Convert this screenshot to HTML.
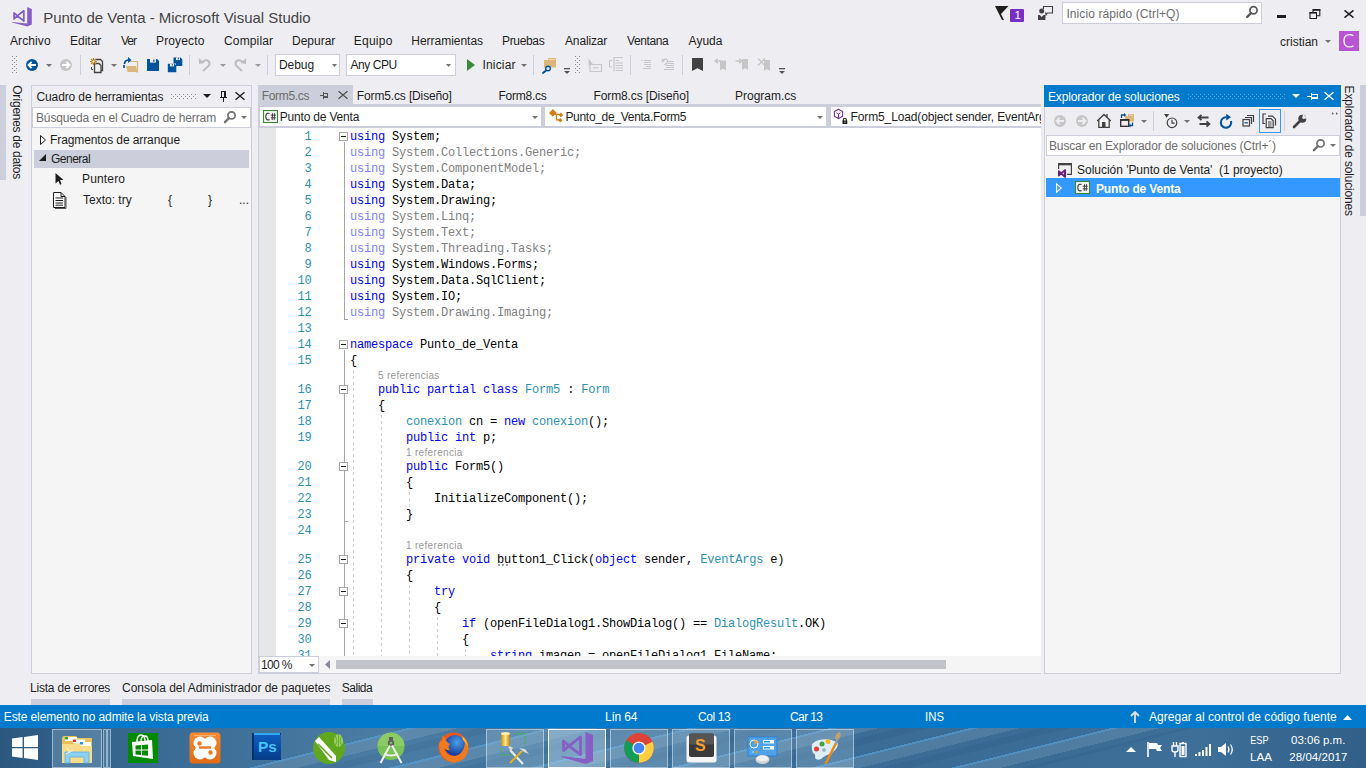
<!DOCTYPE html>
<html><head><meta charset="utf-8"><title>Punto de Venta - Microsoft Visual Studio</title>
<style>
html,body{margin:0;padding:0;}
body{width:1366px;height:768px;overflow:hidden;position:relative;background:#EEEEF2;font-family:'Liberation Sans', sans-serif;}
.t{position:absolute;white-space:pre;}
.r{position:absolute;}
svg.r{overflow:visible;}
</style></head><body>
<svg class="r" style="left:12px;top:7px;" width="20" height="20" viewBox="0 0 20 20"><path d="M15.2 0 L19.8 2 L19.8 17.6 L15.4 19.6 L0 15.6 L0 15 L15.2 16.6 Z" fill="#865FC5"/><path d="M2.1 5.9 L2.1 11.9 L5.3 8.9 Z M5.3 8.9 L11.8 3.8 L11.8 14 Z" fill="none" stroke="#865FC5" stroke-width="1.8" stroke-linejoin="round"/></svg>
<div class="t" style="left:43.20px;top:10.30px;font-size:15px;line-height:15px;color:#444444;font-weight:400;font-family:'Liberation Sans', sans-serif;letter-spacing:-0.018px;">Punto de Venta - Microsoft Visual Studio</div>
<svg class="r" style="left:995px;top:6px;" width="14" height="15" viewBox="0 0 14 15"><path d="M0 0 H13.5 L6 8 L9 14 L7 14 Z" fill="#1E1E1E"/></svg>
<div class="r" style="left:1010px;top:9px;width:14px;height:13px;background:#7A2FC4;border-radius:1px;"></div>
<div class="t" style="left:1014.5px;top:10.27px;font-size:11.5px;line-height:11.5px;color:#FFFFFF;font-weight:400;font-family:'Liberation Sans', sans-serif;letter-spacing:0px;">1</div>
<svg class="r" style="left:1038px;top:5px;" width="16" height="16" viewBox="0 0 16 16"><circle cx="3.7" cy="6" r="2.5" fill="#424242"/><path d="M0 15 V10 H1.8 L3.7 12 L5.6 10 H7.4 V15 Z" fill="#424242"/><path d="M5.5 4 V1.5 H14.5 V8 H9.5 L8 10 L7.8 8 H7" fill="none" stroke="#424242" stroke-width="1.1"/></svg>
<div class="r" style="left:1062px;top:2px;width:200px;height:22px;background:#FFFFFF;box-sizing:border-box;border:1px solid #CCCEDB;"></div>
<div class="t" style="left:1066.40px;top:7.84px;font-size:12px;line-height:12px;color:#6D6D6D;font-weight:400;font-family:'Liberation Sans', sans-serif;letter-spacing:0.095px;">Inicio rápido (Ctrl+Q)</div>
<svg class="r" style="left:1244px;top:4px;" width="14" height="15" viewBox="0 0 14 15"><circle cx="9.5" cy="6.3" r="3.6" fill="none" stroke="#555555" stroke-width="1.7"/><path d="M7 9 L3.2 13" stroke="#555555" stroke-width="2.4" stroke-linecap="round"/></svg>
<div class="r" style="left:1277px;top:15px;width:9px;height:3px;background:#1E1E1E;"></div>
<svg class="r" style="left:1309px;top:9px;" width="12" height="11" viewBox="0 0 12 11"><path d="M1 3.5 H7.5 V9.5 H1 Z" fill="none" stroke="#1E1E1E" stroke-width="1.1"/><rect x="0.5" y="3" width="7.5" height="1.6" fill="#1E1E1E"/><path d="M4 3 V0.5 H10.8 V6.8 H8" fill="none" stroke="#1E1E1E" stroke-width="1.1"/><rect x="4" y="0" width="7.3" height="1.8" fill="#1E1E1E"/></svg>
<svg class="r" style="left:1344px;top:10px;" width="10" height="8" viewBox="0 0 10 8"><path d="M0.5 0.3 L9.5 7.7 M9.5 0.3 L0.5 7.7" stroke="#1E1E1E" stroke-width="1.5"/></svg>
<div class="t" style="left:1280.00px;top:35.84px;font-size:12px;line-height:12px;color:#1E1E1E;font-weight:400;font-family:'Liberation Sans', sans-serif;letter-spacing:0.000px;">cristian</div>
<svg class="r" style="left:1325px;top:40px;" width="6" height="3" viewBox="0 0 6 3"><path d="M0 0 H6 L3 3 Z" fill="#717171"/></svg>
<div class="r" style="left:1339px;top:31px;width:20px;height:20px;background:#B955D3;"></div>
<svg class="r" style="left:1343px;top:34px;" width="12" height="14" viewBox="0 0 12 14"><path d="M10.3 1.8 Q9 0.6 6.6 0.6 Q1 0.6 1 6.8 Q1 13 6.6 13 Q9 13 10.5 11.8" fill="none" stroke="#FFFFFF" stroke-width="1.2"/></svg>
<div class="t" style="left:10.00px;top:34.84px;font-size:12px;line-height:12px;color:#1E1E1E;font-weight:400;font-family:'Liberation Sans', sans-serif;letter-spacing:0.100px;">Archivo</div>
<div class="t" style="left:70.00px;top:34.84px;font-size:12px;line-height:12px;color:#1E1E1E;font-weight:400;font-family:'Liberation Sans', sans-serif;letter-spacing:0.000px;">Editar</div>
<div class="t" style="left:121.00px;top:34.84px;font-size:12px;line-height:12px;color:#1E1E1E;font-weight:400;font-family:'Liberation Sans', sans-serif;letter-spacing:-1.000px;">Ver</div>
<div class="t" style="left:156.00px;top:34.84px;font-size:12px;line-height:12px;color:#1E1E1E;font-weight:400;font-family:'Liberation Sans', sans-serif;letter-spacing:0.143px;">Proyecto</div>
<div class="t" style="left:224.00px;top:34.84px;font-size:12px;line-height:12px;color:#1E1E1E;font-weight:400;font-family:'Liberation Sans', sans-serif;letter-spacing:0.143px;">Compilar</div>
<div class="t" style="left:292.00px;top:34.84px;font-size:12px;line-height:12px;color:#1E1E1E;font-weight:400;font-family:'Liberation Sans', sans-serif;letter-spacing:0.000px;">Depurar</div>
<div class="t" style="left:353.80px;top:34.84px;font-size:12px;line-height:12px;color:#1E1E1E;font-weight:400;font-family:'Liberation Sans', sans-serif;letter-spacing:0.240px;">Equipo</div>
<div class="t" style="left:411.30px;top:34.84px;font-size:12px;line-height:12px;color:#1E1E1E;font-weight:400;font-family:'Liberation Sans', sans-serif;letter-spacing:-0.027px;">Herramientas</div>
<div class="t" style="left:502.00px;top:34.84px;font-size:12px;line-height:12px;color:#1E1E1E;font-weight:400;font-family:'Liberation Sans', sans-serif;letter-spacing:-0.333px;">Pruebas</div>
<div class="t" style="left:565.00px;top:34.84px;font-size:12px;line-height:12px;color:#1E1E1E;font-weight:400;font-family:'Liberation Sans', sans-serif;letter-spacing:-0.143px;">Analizar</div>
<div class="t" style="left:627.00px;top:34.84px;font-size:12px;line-height:12px;color:#1E1E1E;font-weight:400;font-family:'Liberation Sans', sans-serif;letter-spacing:-0.400px;">Ventana</div>
<div class="t" style="left:688.60px;top:34.84px;font-size:12px;line-height:12px;color:#1E1E1E;font-weight:400;font-family:'Liberation Sans', sans-serif;letter-spacing:0.000px;">Ayuda</div>
<div id="toolbar">
<svg class="r" style="left:12px;top:56px" width="5" height="17"><rect x="0" y="0" width="1" height="1" fill="#8A8A8A"/><rect x="4" y="0" width="1" height="1" fill="#8A8A8A"/><rect x="0" y="4" width="1" height="1" fill="#8A8A8A"/><rect x="4" y="4" width="1" height="1" fill="#8A8A8A"/><rect x="0" y="8" width="1" height="1" fill="#8A8A8A"/><rect x="4" y="8" width="1" height="1" fill="#8A8A8A"/><rect x="0" y="12" width="1" height="1" fill="#8A8A8A"/><rect x="4" y="12" width="1" height="1" fill="#8A8A8A"/><rect x="0" y="16" width="1" height="1" fill="#8A8A8A"/><rect x="4" y="16" width="1" height="1" fill="#8A8A8A"/><rect x="2" y="2" width="1" height="1" fill="#8A8A8A"/><rect x="2" y="6" width="1" height="1" fill="#8A8A8A"/><rect x="2" y="10" width="1" height="1" fill="#8A8A8A"/><rect x="2" y="14" width="1" height="1" fill="#8A8A8A"/></svg>
<svg class="r" style="left:26px;top:59px;" width="12" height="12" viewBox="0 0 12 12"><circle cx="6" cy="6" r="6" fill="#00539C"/><path d="M2.5 6 H10 M5.6 2.8 L2.5 6 L5.6 9.2" fill="none" stroke="#fff" stroke-width="1.9"/></svg>
<svg class="r" style="left:46px;top:64px;" width="6" height="3" viewBox="0 0 6 3"><path d="M0 0 H6 L3.0 3 Z" fill="#717171"/></svg>
<svg class="r" style="left:60px;top:59px;" width="12" height="12" viewBox="0 0 12 12"><circle cx="6" cy="6" r="6" fill="#C6C6C6"/><path d="M2 6 H9.5 M6.4 2.8 L9.5 6 L6.4 9.2" fill="none" stroke="#fff" stroke-width="1.9"/></svg>
<div class="r" style="left:80px;top:55px;width:1px;height:20px;background:#CCCEDB;"></div>
<svg class="r" style="left:88px;top:57px;" width="17" height="17" viewBox="0 0 17 17"><path d="M7.5 2.5 H12.5 L14.5 4.5 V13.5 H13" fill="none" stroke="#424242" stroke-width="1.3"/><path d="M6.5 6.5 H11 L13 8.5 V15.5 H6.5 Z" fill="#F0F0F0" stroke="#424242" stroke-width="1.3"/><path d="M3.5 10 V12.5 H5" fill="none" stroke="#424242" stroke-width="1"/><path d="M5.5 1 V8 M2 4.5 H9 M3 2 L8 7 M8 2 L3 7" stroke="#C27D1A" stroke-width="1.1"/><circle cx="5.5" cy="4.5" r="1.6" fill="#EEEEF2" stroke="#C27D1A" stroke-width="1"/></svg>
<svg class="r" style="left:111px;top:64px;" width="6" height="3" viewBox="0 0 6 3"><path d="M0 0 H6 L3.0 3 Z" fill="#717171"/></svg>
<svg class="r" style="left:123px;top:57px;" width="16" height="16" viewBox="0 0 16 16"><path d="M7 4.5 H14.5 V15 H13" fill="none" stroke="#DCB67A" stroke-width="1.2"/><path d="M3 9 H13 L14.5 15 H4.5 Z" fill="#DCB67A"/><path d="M1 8 V11 M1.5 7 Q1.5 3 6 3" fill="none" stroke="#00539C" stroke-width="1.7"/><path d="M5 0 L8.5 3 L5 6 Z" fill="#00539C"/></svg>
<svg class="r" style="left:147px;top:59px;" width="12" height="12" viewBox="0 0 12 12"><path d="M0 0 H10 L12 2 V12 H0 Z" fill="#00539C"/><rect x="3" y="0" width="6" height="3.6" fill="#EEEEF2"/><rect x="6.2" y="0.6" width="1.3" height="2.2" fill="#00539C"/></svg>
<svg class="r" style="left:167px;top:57px;" width="16" height="16" viewBox="0 0 16 16"><path d="M6.5 0.5 H13.5 L15.3 2.3 V9 H9 V6.5 H6.5 Z" fill="#00539C"/><rect x="9" y="0.5" width="4" height="2.6" fill="#EEEEF2"/><rect x="10.8" y="0.8" width="1" height="1.6" fill="#00539C"/><path d="M0.8 6.8 H7.5 L9.3 8.6 V15.3 H0.8 Z" fill="#00539C"/><rect x="3" y="6.8" width="4" height="2.6" fill="#EEEEF2"/><rect x="4.8" y="7.1" width="1" height="1.6" fill="#00539C"/></svg>
<div class="r" style="left:189px;top:55px;width:1px;height:20px;background:#CCCEDB;"></div>
<svg class="r" style="left:198px;top:57px;" width="14" height="16" viewBox="0 0 14 16"><path d="M4.5 5 Q7 2.5 9.5 3.5 Q12.5 5 11 8.5 L5 14" fill="none" stroke="#BDBDBD" stroke-width="2"/><path d="M0.8 1 L1 7 L6.5 6 Z" fill="#BDBDBD"/></svg>
<svg class="r" style="left:220px;top:64px;" width="6" height="3" viewBox="0 0 6 3"><path d="M0 0 H6 L3.0 3 Z" fill="#999999"/></svg>
<svg class="r" style="left:233px;top:57px;" width="14" height="16" viewBox="0 0 14 16"><path d="M9.5 5 Q7 2.5 4.5 3.5 Q1.5 5 3 8.5 L9 14" fill="none" stroke="#BDBDBD" stroke-width="2"/><path d="M13.2 1 L13 7 L7.5 6 Z" fill="#BDBDBD"/></svg>
<svg class="r" style="left:255px;top:64px;" width="6" height="3" viewBox="0 0 6 3"><path d="M0 0 H6 L3.0 3 Z" fill="#999999"/></svg>
<div class="r" style="left:267px;top:55px;width:1px;height:20px;background:#CCCEDB;"></div>
<div class="r" style="left:275px;top:54px;width:65px;height:22px;background:#FFFFFF;box-sizing:border-box;border:1px solid #CCCEDB;"></div>
<div class="t" style="left:279.00px;top:59.14px;font-size:12px;line-height:12px;color:#1E1E1E;font-weight:400;font-family:'Liberation Sans', sans-serif;letter-spacing:-0.050px;">Debug</div>
<svg class="r" style="left:332px;top:64px;" width="5" height="3" viewBox="0 0 5 3"><path d="M0 0 H5 L2.5 3 Z" fill="#717171"/></svg>
<div class="r" style="left:346px;top:54px;width:110px;height:22px;background:#FFFFFF;box-sizing:border-box;border:1px solid #CCCEDB;"></div>
<div class="t" style="left:350.50px;top:59.14px;font-size:12px;line-height:12px;color:#1E1E1E;font-weight:400;font-family:'Liberation Sans', sans-serif;letter-spacing:-0.450px;">Any CPU</div>
<svg class="r" style="left:446px;top:64px;" width="5" height="3" viewBox="0 0 5 3"><path d="M0 0 H5 L2.5 3 Z" fill="#717171"/></svg>
<svg class="r" style="left:467px;top:59px;" width="8" height="12" viewBox="0 0 8 12"><path d="M0 0 L8 6 L0 12 Z" fill="#388A34"/></svg>
<div class="t" style="left:482.50px;top:59.14px;font-size:12px;line-height:12px;color:#1E1E1E;font-weight:400;font-family:'Liberation Sans', sans-serif;letter-spacing:0.167px;">Iniciar</div>
<svg class="r" style="left:521px;top:64px;" width="6" height="3" viewBox="0 0 6 3"><path d="M0 0 H6 L3.0 3 Z" fill="#717171"/></svg>
<div class="r" style="left:533px;top:55px;width:1px;height:20px;background:#CCCEDB;"></div>
<svg class="r" style="left:541px;top:57px;" width="16" height="16" viewBox="0 0 16 16"><path d="M3 3 H7 V1 H15 V10.5 H3 Z" fill="#DCB67A"/><path d="M8 2.5 H14" stroke="#F3E3C3" stroke-width="0.8"/><circle cx="7" cy="11.5" r="2.3" fill="#EEEEF2" stroke="#00539C" stroke-width="1.4"/><path d="M5.3 13.2 L2 16" stroke="#00539C" stroke-width="1.9" stroke-linecap="round"/></svg>
<svg class="r" style="left:564px;top:68px;" width="6" height="6" viewBox="0 0 6 6"><rect x="0" y="0" width="6" height="1.3" fill="#555555"/><path d="M0 3 H6 L3 6 Z" fill="#555555"/></svg>
<svg class="r" style="left:575px;top:56px" width="5" height="17"><rect x="0" y="0" width="1" height="1" fill="#8A8A8A"/><rect x="4" y="0" width="1" height="1" fill="#8A8A8A"/><rect x="0" y="4" width="1" height="1" fill="#8A8A8A"/><rect x="4" y="4" width="1" height="1" fill="#8A8A8A"/><rect x="0" y="8" width="1" height="1" fill="#8A8A8A"/><rect x="4" y="8" width="1" height="1" fill="#8A8A8A"/><rect x="0" y="12" width="1" height="1" fill="#8A8A8A"/><rect x="4" y="12" width="1" height="1" fill="#8A8A8A"/><rect x="0" y="16" width="1" height="1" fill="#8A8A8A"/><rect x="4" y="16" width="1" height="1" fill="#8A8A8A"/><rect x="2" y="2" width="1" height="1" fill="#8A8A8A"/><rect x="2" y="6" width="1" height="1" fill="#8A8A8A"/><rect x="2" y="10" width="1" height="1" fill="#8A8A8A"/><rect x="2" y="14" width="1" height="1" fill="#8A8A8A"/></svg>
<svg class="r" style="left:588px;top:58px;" width="14" height="14" viewBox="0 0 14 14"><path d="M0.5 0 L0.5 8.5 L2.3 6.8 L5.3 6.8 Z" fill="#C6C6C6"/><path d="M2 6.5 H13.5 V13.5 H2 Z" fill="none" stroke="#C6C6C6" stroke-width="1.1"/><path d="M5 9.8 H10.5" stroke="#C6C6C6" stroke-width="1.1"/></svg>
<svg class="r" style="left:609px;top:57px;" width="15" height="15" viewBox="0 0 15 15"><path d="M0.5 3.5 V10 H3 M0.5 3.5 H3 M5 0.5 V14.5 M5 0.5 H14 M6.5 3.5 H10 M6.5 6 H14 M6.5 8.5 H14 M6.5 11 H14 M6.5 13.5 H14" fill="none" stroke="#C6C6C6" stroke-width="1.1"/></svg>
<div class="r" style="left:630px;top:55px;width:1px;height:20px;background:#CCCEDB;"></div>
<svg class="r" style="left:640px;top:59px;" width="12" height="11" viewBox="0 0 12 11"><path d="M1 1.5 H2.5 M4 1.5 H11 M4 3.5 H11 M4 5.5 H11 M6 7.5 H11 M3 9.5 H11" stroke="#C6C6C6" stroke-width="1"/></svg>
<svg class="r" style="left:661px;top:58px;" width="14" height="13" viewBox="0 0 14 13"><path d="M2 2 Q5 0 6.5 2.5 Q7.5 4.5 3.5 7" fill="none" stroke="#C6C6C6" stroke-width="1.3"/><path d="M0.5 0.5 L1 4.5 L4 3 Z" fill="#C6C6C6"/><path d="M7 3.5 H13 M7 5.5 H13 M5 7.5 H13 M5 9.5 H13 M3 11.5 H13" stroke="#C6C6C6" stroke-width="1"/></svg>
<div class="r" style="left:682px;top:55px;width:1px;height:20px;background:#CCCEDB;"></div>
<svg class="r" style="left:692px;top:58px;" width="11" height="13" viewBox="0 0 11 13"><path d="M0 0 H11 V13 L5.5 10.2 L0 13 Z" fill="#424242"/></svg>
<svg class="r" style="left:714px;top:58px;" width="13" height="13" viewBox="0 0 13 13"><path d="M6 2.5 H12 V12.5 L9 10.5 L6 12.5 Z" fill="#C6C6C6"/><path d="M1 3 H7 M3.8 0.8 L1.2 3 L3.8 5.2" fill="none" stroke="#C6C6C6" stroke-width="1.6"/></svg>
<svg class="r" style="left:735px;top:58px;" width="14" height="13" viewBox="0 0 14 13"><path d="M7 1 H13 V12 L10 10 L7 12 Z" fill="#C6C6C6"/><path d="M0.5 3 H6.5 M4.2 0.8 L6.8 3 L4.2 5.2" fill="none" stroke="#C6C6C6" stroke-width="1.6"/></svg>
<svg class="r" style="left:757px;top:58px;" width="14" height="14" viewBox="0 0 14 14"><path d="M7 2 H13 V13 L10 11 L7 13 Z" fill="#C6C6C6"/><path d="M1 0.5 L8 7.5 M8 0.5 L1 7.5" stroke="#C6C6C6" stroke-width="1.3"/></svg>
<svg class="r" style="left:779px;top:68px;" width="6" height="6" viewBox="0 0 6 6"><rect x="0" y="0" width="6" height="1.3" fill="#555555"/><path d="M0 3 H6 L3 6 Z" fill="#555555"/></svg>
</div>
<div class="r" style="left:0px;top:85px;width:6px;height:95px;background:#CCCEDB;"></div>
<div class="t" style="left:0.00px;top:0.00px;font-size:12px;line-height:12px;color:#1E1E1E;font-weight:400;font-family:'Liberation Sans', sans-serif;letter-spacing:-0.300px;transform-origin:0 0;transform:translate(23.3px,85.3px) rotate(90deg);">Orígenes de datos</div>
<div class="r" style="left:31px;top:85px;width:221px;height:589px;background:#F5F5F5;box-sizing:border-box;border:1px solid #CCCEDB;"></div>
<div class="r" style="left:32px;top:86px;width:219px;height:21px;background:#EEEEF2;"></div>
<div class="t" style="left:36.50px;top:90.84px;font-size:12px;line-height:12px;color:#1E1E1E;font-weight:400;font-family:'Liberation Sans', sans-serif;letter-spacing:-0.119px;">Cuadro de herramientas</div>
<svg class="r" style="left:171px;top:94px" width="26" height="5"><rect x="0" y="0" width="1" height="1" fill="#8E8E8E"/><rect x="4" y="0" width="1" height="1" fill="#8E8E8E"/><rect x="8" y="0" width="1" height="1" fill="#8E8E8E"/><rect x="12" y="0" width="1" height="1" fill="#8E8E8E"/><rect x="16" y="0" width="1" height="1" fill="#8E8E8E"/><rect x="20" y="0" width="1" height="1" fill="#8E8E8E"/><rect x="24" y="0" width="1" height="1" fill="#8E8E8E"/><rect x="0" y="4" width="1" height="1" fill="#8E8E8E"/><rect x="4" y="4" width="1" height="1" fill="#8E8E8E"/><rect x="8" y="4" width="1" height="1" fill="#8E8E8E"/><rect x="12" y="4" width="1" height="1" fill="#8E8E8E"/><rect x="16" y="4" width="1" height="1" fill="#8E8E8E"/><rect x="20" y="4" width="1" height="1" fill="#8E8E8E"/><rect x="24" y="4" width="1" height="1" fill="#8E8E8E"/><rect x="2" y="2" width="1" height="1" fill="#8E8E8E"/><rect x="6" y="2" width="1" height="1" fill="#8E8E8E"/><rect x="10" y="2" width="1" height="1" fill="#8E8E8E"/><rect x="14" y="2" width="1" height="1" fill="#8E8E8E"/><rect x="18" y="2" width="1" height="1" fill="#8E8E8E"/><rect x="22" y="2" width="1" height="1" fill="#8E8E8E"/></svg>
<svg class="r" style="left:203px;top:94px;" width="8" height="4" viewBox="0 0 8 4"><path d="M0 0 H8 L4 4 Z" fill="#1E1E1E"/></svg>
<svg class="r" style="left:220px;top:91px;" width="7" height="11" viewBox="0 0 7 11"><rect x="1" y="0" width="4" height="1" fill="#1E1E1E"/><rect x="1" y="0" width="1" height="6" fill="#1E1E1E"/><rect x="4" y="0" width="2" height="6" fill="#1E1E1E"/><rect x="0" y="6" width="7" height="1" fill="#1E1E1E"/><rect x="3" y="7" width="1" height="4" fill="#1E1E1E"/></svg>
<svg class="r" style="left:235px;top:92px;" width="10" height="8" viewBox="0 0 10 8"><path d="M0.5 0.3 L9.5 7.7 M9.5 0.3 L0.5 7.7" stroke="#1E1E1E" stroke-width="1.4"/></svg>
<div class="r" style="left:32px;top:107px;width:219px;height:21px;background:#FFFFFF;box-sizing:border-box;border:1px solid #CCCEDB;"></div>
<div class="t" style="left:36.00px;top:111.84px;font-size:12px;line-height:12px;color:#6D6D6D;font-weight:400;font-family:'Liberation Sans', sans-serif;letter-spacing:-0.133px;">Búsqueda en el Cuadro de herram</div>
<svg class="r" style="left:222px;top:110px;" width="15" height="15" viewBox="0 0 15 15"><circle cx="9.5" cy="5.4" r="3.6" fill="none" stroke="#717171" stroke-width="1.7"/><path d="M7 8 L3 12.2" stroke="#717171" stroke-width="2.4" stroke-linecap="round"/></svg>
<svg class="r" style="left:241px;top:116px;" width="6" height="3" viewBox="0 0 6 3"><path d="M0 0 H6 L3.0 3 Z" fill="#717171"/></svg>
<svg class="r" style="left:40px;top:135px;" width="6" height="10" viewBox="0 0 6 10"><path d="M0.5 0.5 L5.5 5 L0.5 9.5 Z" fill="#fff" stroke="#1E1E1E" stroke-width="1"/></svg>
<div class="t" style="left:50.00px;top:133.84px;font-size:12px;line-height:12px;color:#1E1E1E;font-weight:400;font-family:'Liberation Sans', sans-serif;letter-spacing:-0.095px;">Fragmentos de arranque</div>
<div class="r" style="left:34px;top:150px;width:215px;height:18px;background:#CCCEDB;"></div>
<svg class="r" style="left:39px;top:154px;" width="7" height="7" viewBox="0 0 7 7"><path d="M7 0 V7 H0 Z" fill="#1E1E1E"/></svg>
<div class="t" style="left:51.00px;top:152.84px;font-size:12px;line-height:12px;color:#1E1E1E;font-weight:400;font-family:'Liberation Sans', sans-serif;letter-spacing:-0.500px;">General</div>
<svg class="r" style="left:55px;top:173px;" width="9" height="12" viewBox="0 0 9 12"><path d="M0.5 0 L8.5 7 L5 7 L6.5 11 L5 11.7 L3.5 8 L0.5 10.5 Z" fill="#1E1E1E"/></svg>
<div class="t" style="left:82.00px;top:172.84px;font-size:12px;line-height:12px;color:#1E1E1E;font-weight:400;font-family:'Liberation Sans', sans-serif;letter-spacing:0.167px;">Puntero</div>
<svg class="r" style="left:53px;top:192px;" width="14" height="17" viewBox="0 0 14 17"><path d="M0.5 0.5 H8 L12 4.5 V15.5 H0.5 Z" fill="#fff" stroke="#1E1E1E" stroke-width="1"/><path d="M8 0.5 V4.5 H12" fill="none" stroke="#1E1E1E"/><path d="M2.5 6 H10 M2.5 8.5 H10 M2.5 11 H10 M2.5 13.2 H10" stroke="#1E1E1E" stroke-width="1"/><path d="M13 5 V16.5 H2" fill="none" stroke="#555" stroke-width="1"/></svg>
<div class="t" style="left:83.00px;top:193.84px;font-size:12px;line-height:12px;color:#1E1E1E;font-weight:400;font-family:'Liberation Sans', sans-serif;letter-spacing:0.000px;">Texto: try</div>
<div class="t" style="left:168px;top:193.84px;font-size:12px;line-height:12px;color:#1E1E1E;font-weight:400;font-family:'Liberation Sans', sans-serif;letter-spacing:0px;">{</div>
<div class="t" style="left:208px;top:193.84px;font-size:12px;line-height:12px;color:#1E1E1E;font-weight:400;font-family:'Liberation Sans', sans-serif;letter-spacing:0px;">}</div>
<div class="t" style="left:239px;top:193.84px;font-size:12px;line-height:12px;color:#1E1E1E;font-weight:400;font-family:'Liberation Sans', sans-serif;letter-spacing:0px;">...</div>
<div class="r" style="left:258px;top:85px;width:95px;height:19px;background:#CCCEDB;"></div>
<div class="t" style="left:261.70px;top:89.84px;font-size:12px;line-height:12px;color:#6D6D6D;font-weight:400;font-family:'Liberation Sans', sans-serif;letter-spacing:-0.314px;">Form5.cs</div>
<svg class="r" style="left:320px;top:92px;" width="8" height="7" viewBox="0 0 8 7"><rect x="0" y="3" width="3" height="1" fill="#555555"/><rect x="3" y="0" width="1" height="7" fill="#555555"/><rect x="4" y="1" width="4" height="1" fill="#555555"/><rect x="7" y="1" width="1" height="5" fill="#555555"/><rect x="4" y="4" width="4" height="2" fill="#555555"/></svg>
<svg class="r" style="left:338px;top:91px;" width="10" height="8" viewBox="0 0 10 8"><path d="M0.5 0.3 L9.5 7.7 M9.5 0.3 L0.5 7.7" stroke="#555555" stroke-width="1.3"/></svg>
<div class="t" style="left:356.80px;top:89.84px;font-size:12px;line-height:12px;color:#1E1E1E;font-weight:400;font-family:'Liberation Sans', sans-serif;letter-spacing:-0.138px;">Form5.cs [Diseño]</div>
<div class="t" style="left:498.50px;top:89.84px;font-size:12px;line-height:12px;color:#1E1E1E;font-weight:400;font-family:'Liberation Sans', sans-serif;letter-spacing:-0.257px;">Form8.cs</div>
<div class="t" style="left:593.50px;top:89.84px;font-size:12px;line-height:12px;color:#1E1E1E;font-weight:400;font-family:'Liberation Sans', sans-serif;letter-spacing:-0.112px;">Form8.cs [Diseño]</div>
<div class="t" style="left:735.10px;top:89.84px;font-size:12px;line-height:12px;color:#1E1E1E;font-weight:400;font-family:'Liberation Sans', sans-serif;letter-spacing:-0.022px;">Program.cs</div>
<div class="r" style="left:258px;top:104px;width:783px;height:3px;background:#CCCEDB;"></div>
<div class="r" style="left:258px;top:107px;width:783px;height:21px;background:#CCCEDB;"></div>
<div class="r" style="left:260px;top:107px;width:281px;height:19px;background:#FFFFFF;"></div>
<div class="r" style="left:545px;top:107px;width:281px;height:19px;background:#FFFFFF;"></div>
<div class="r" style="left:831px;top:107px;width:210px;height:19px;background:#FFFFFF;"></div>
<svg class="r" style="left:263px;top:110px;" width="15" height="13" viewBox="0 0 15 13"><rect x="0" y="0" width="15" height="13" fill="#FFFFFF"/><rect x="0.5" y="0.5" width="14" height="12" fill="#F3F3F3" stroke="#388A34" stroke-width="1.1"/><path d="M6.6 3.6 Q6 3.2 5 3.2 Q2.8 3.2 2.8 6.5 Q2.8 9.8 5 9.8 Q6 9.8 6.6 9.4" fill="none" stroke="#424242" stroke-width="1.15"/><path d="M7.8 5.2 H12.8 M7.8 7.8 H12.8 M9.6 3.2 L9.2 10 M11.6 3.2 L11.2 10" stroke="#424242" stroke-width="1"/></svg>
<div class="t" style="left:279.70px;top:110.84px;font-size:12px;line-height:12px;color:#1E1E1E;font-weight:400;font-family:'Liberation Sans', sans-serif;letter-spacing:-0.185px;">Punto de Venta</div>
<svg class="r" style="left:532px;top:116px;" width="6" height="3" viewBox="0 0 6 3"><path d="M0 0 H6 L3.0 3 Z" fill="#717171"/></svg>
<svg class="r" style="left:548px;top:108px;" width="16" height="16" viewBox="0 0 16 16"><g fill="#CF7F14"><path d="M4.9 1 L8.7 4.9 L4.9 8.8 L1 4.9 Z"/><path d="M12.9 4.6 L15.2 6.9 L12.9 9.2 L10.6 6.9 Z"/><path d="M12.3 10 L14.6 12.3 L12.3 14.6 L10 12.3 Z"/></g><path d="M6 6.3 H12 M8.5 6.3 V11.8 H11.5" fill="none" stroke="#CF7F14" stroke-width="1.2"/></svg>
<div class="t" style="left:565.40px;top:110.84px;font-size:12px;line-height:12px;color:#1E1E1E;font-weight:400;font-family:'Liberation Sans', sans-serif;letter-spacing:-0.300px;">Punto_de_Venta.Form5</div>
<svg class="r" style="left:817px;top:116px;" width="6" height="3" viewBox="0 0 6 3"><path d="M0 0 H6 L3.0 3 Z" fill="#717171"/></svg>
<div class="r" style="left:831px;top:107px;width:210px;height:19px;overflow:hidden">
<svg class="r" style="left:3px;top:1px;" width="18" height="17" viewBox="0 0 18 17"><path d="M4.5 1.2 L8.6 3.5 V8.3 L4.5 10.6 L0.4 8.3 V3.5 Z" fill="none" stroke="#7030A0" stroke-width="1.1"/><path d="M2.5 4.8 L4.5 6 L6.5 4.8 M4.5 6 V10.3" fill="none" stroke="#7030A0" stroke-width="1"/><path d="M9.3 13 V11.5 Q9.3 10.3 10.8 10.3 Q12.3 10.3 12.3 11.5 V13" fill="none" stroke="#1E1E1E" stroke-width="1.1"/><rect x="8.5" y="12.5" width="4.8" height="3.5" fill="#1E1E1E"/><rect x="10.4" y="13.6" width="1" height="1" fill="#FFFFFF"/></svg>
<div class="t" style="left:19.60px;top:3.84px;font-size:12px;line-height:12px;color:#1E1E1E;font-weight:400;font-family:'Liberation Sans', sans-serif;letter-spacing:-0.135px;">Form5_Load(object sender, EventArgs e)</div>
</div>
<div class="r" style="left:258px;top:128px;width:783px;height:545px;background:#FFFFFF;"></div>
<div class="r" style="left:258px;top:128px;width:1px;height:545px;background:#CCCEDB;"></div>
<div class="r" style="left:259px;top:128px;width:17px;height:528px;background:#E6E7E8;"></div>
<div class="r" style="left:259px;top:128px;width:782px;height:528px;overflow:hidden">
<div class="t" style="left:45.5px;top:2.80px;font-size:12px;line-height:12px;color:#2B91AF;font-weight:400;font-family:'Liberation Mono', monospace;letter-spacing:-0.1999999999999993px;">1</div>
<div class="t" style="left:91px;top:2.80px;font-size:12px;line-height:12px;color:#000;font-weight:400;font-family:'Liberation Mono', monospace;letter-spacing:-0.1999999999999993px;white-space:pre;"><span style="color:#0000FF">using</span><span style="color:#000000"> System;</span></div>
<div class="t" style="left:45.5px;top:18.80px;font-size:12px;line-height:12px;color:#2B91AF;font-weight:400;font-family:'Liberation Mono', monospace;letter-spacing:-0.1999999999999993px;">2</div>
<div class="t" style="left:91px;top:18.80px;font-size:12px;line-height:12px;color:#000;font-weight:400;font-family:'Liberation Mono', monospace;letter-spacing:-0.1999999999999993px;white-space:pre;"><span style="color:#7F7FFF">using</span><span style="color:#808080"> System.Collections.Generic;</span></div>
<div class="t" style="left:45.5px;top:34.80px;font-size:12px;line-height:12px;color:#2B91AF;font-weight:400;font-family:'Liberation Mono', monospace;letter-spacing:-0.1999999999999993px;">3</div>
<div class="t" style="left:91px;top:34.80px;font-size:12px;line-height:12px;color:#000;font-weight:400;font-family:'Liberation Mono', monospace;letter-spacing:-0.1999999999999993px;white-space:pre;"><span style="color:#7F7FFF">using</span><span style="color:#808080"> System.ComponentModel;</span></div>
<div class="t" style="left:45.5px;top:50.80px;font-size:12px;line-height:12px;color:#2B91AF;font-weight:400;font-family:'Liberation Mono', monospace;letter-spacing:-0.1999999999999993px;">4</div>
<div class="t" style="left:91px;top:50.80px;font-size:12px;line-height:12px;color:#000;font-weight:400;font-family:'Liberation Mono', monospace;letter-spacing:-0.1999999999999993px;white-space:pre;"><span style="color:#0000FF">using</span><span style="color:#000000"> System.Data;</span></div>
<div class="t" style="left:45.5px;top:66.80px;font-size:12px;line-height:12px;color:#2B91AF;font-weight:400;font-family:'Liberation Mono', monospace;letter-spacing:-0.1999999999999993px;">5</div>
<div class="t" style="left:91px;top:66.80px;font-size:12px;line-height:12px;color:#000;font-weight:400;font-family:'Liberation Mono', monospace;letter-spacing:-0.1999999999999993px;white-space:pre;"><span style="color:#0000FF">using</span><span style="color:#000000"> System.Drawing;</span></div>
<div class="t" style="left:45.5px;top:82.80px;font-size:12px;line-height:12px;color:#2B91AF;font-weight:400;font-family:'Liberation Mono', monospace;letter-spacing:-0.1999999999999993px;">6</div>
<div class="t" style="left:91px;top:82.80px;font-size:12px;line-height:12px;color:#000;font-weight:400;font-family:'Liberation Mono', monospace;letter-spacing:-0.1999999999999993px;white-space:pre;"><span style="color:#7F7FFF">using</span><span style="color:#808080"> System.Linq;</span></div>
<div class="t" style="left:45.5px;top:98.80px;font-size:12px;line-height:12px;color:#2B91AF;font-weight:400;font-family:'Liberation Mono', monospace;letter-spacing:-0.1999999999999993px;">7</div>
<div class="t" style="left:91px;top:98.80px;font-size:12px;line-height:12px;color:#000;font-weight:400;font-family:'Liberation Mono', monospace;letter-spacing:-0.1999999999999993px;white-space:pre;"><span style="color:#7F7FFF">using</span><span style="color:#808080"> System.Text;</span></div>
<div class="t" style="left:45.5px;top:114.80px;font-size:12px;line-height:12px;color:#2B91AF;font-weight:400;font-family:'Liberation Mono', monospace;letter-spacing:-0.1999999999999993px;">8</div>
<div class="t" style="left:91px;top:114.80px;font-size:12px;line-height:12px;color:#000;font-weight:400;font-family:'Liberation Mono', monospace;letter-spacing:-0.1999999999999993px;white-space:pre;"><span style="color:#7F7FFF">using</span><span style="color:#808080"> System.Threading.Tasks;</span></div>
<div class="t" style="left:45.5px;top:130.80px;font-size:12px;line-height:12px;color:#2B91AF;font-weight:400;font-family:'Liberation Mono', monospace;letter-spacing:-0.1999999999999993px;">9</div>
<div class="t" style="left:91px;top:130.80px;font-size:12px;line-height:12px;color:#000;font-weight:400;font-family:'Liberation Mono', monospace;letter-spacing:-0.1999999999999993px;white-space:pre;"><span style="color:#0000FF">using</span><span style="color:#000000"> System.Windows.Forms;</span></div>
<div class="t" style="left:38.5px;top:146.80px;font-size:12px;line-height:12px;color:#2B91AF;font-weight:400;font-family:'Liberation Mono', monospace;letter-spacing:-0.1999999999999993px;">10</div>
<div class="t" style="left:91px;top:146.80px;font-size:12px;line-height:12px;color:#000;font-weight:400;font-family:'Liberation Mono', monospace;letter-spacing:-0.1999999999999993px;white-space:pre;"><span style="color:#0000FF">using</span><span style="color:#000000"> System.Data.SqlClient;</span></div>
<div class="t" style="left:38.5px;top:162.80px;font-size:12px;line-height:12px;color:#2B91AF;font-weight:400;font-family:'Liberation Mono', monospace;letter-spacing:-0.1999999999999993px;">11</div>
<div class="t" style="left:91px;top:162.80px;font-size:12px;line-height:12px;color:#000;font-weight:400;font-family:'Liberation Mono', monospace;letter-spacing:-0.1999999999999993px;white-space:pre;"><span style="color:#0000FF">using</span><span style="color:#000000"> System.IO;</span></div>
<div class="t" style="left:38.5px;top:178.80px;font-size:12px;line-height:12px;color:#2B91AF;font-weight:400;font-family:'Liberation Mono', monospace;letter-spacing:-0.1999999999999993px;">12</div>
<div class="t" style="left:91px;top:178.80px;font-size:12px;line-height:12px;color:#000;font-weight:400;font-family:'Liberation Mono', monospace;letter-spacing:-0.1999999999999993px;white-space:pre;"><span style="color:#7F7FFF">using</span><span style="color:#808080"> System.Drawing.Imaging;</span></div>
<div class="t" style="left:38.5px;top:194.80px;font-size:12px;line-height:12px;color:#2B91AF;font-weight:400;font-family:'Liberation Mono', monospace;letter-spacing:-0.1999999999999993px;">13</div>
<div class="t" style="left:38.5px;top:210.80px;font-size:12px;line-height:12px;color:#2B91AF;font-weight:400;font-family:'Liberation Mono', monospace;letter-spacing:-0.1999999999999993px;">14</div>
<div class="t" style="left:91px;top:210.80px;font-size:12px;line-height:12px;color:#000;font-weight:400;font-family:'Liberation Mono', monospace;letter-spacing:-0.1999999999999993px;white-space:pre;"><span style="color:#0000FF">namespace</span><span style="color:#000000"> Punto_de_Venta</span></div>
<div class="t" style="left:38.5px;top:226.80px;font-size:12px;line-height:12px;color:#2B91AF;font-weight:400;font-family:'Liberation Mono', monospace;letter-spacing:-0.1999999999999993px;">15</div>
<div class="t" style="left:91px;top:226.80px;font-size:12px;line-height:12px;color:#000;font-weight:400;font-family:'Liberation Mono', monospace;letter-spacing:-0.1999999999999993px;white-space:pre;"><span style="color:#000000">{</span></div>
<div class="t" style="left:119.00px;top:242.53px;font-size:10px;line-height:10px;color:#999999;font-weight:400;font-family:'Liberation Sans', sans-serif;letter-spacing:0.292px;">5 referencias</div>
<div class="t" style="left:38.5px;top:255.80px;font-size:12px;line-height:12px;color:#2B91AF;font-weight:400;font-family:'Liberation Mono', monospace;letter-spacing:-0.1999999999999993px;">16</div>
<div class="t" style="left:91px;top:255.80px;font-size:12px;line-height:12px;color:#000;font-weight:400;font-family:'Liberation Mono', monospace;letter-spacing:-0.1999999999999993px;white-space:pre;"><span style="color:#000000">    </span><span style="color:#0000FF">public</span><span style="color:#000000"> </span><span style="color:#0000FF">partial</span><span style="color:#000000"> </span><span style="color:#0000FF">class</span><span style="color:#000000"> </span><span style="color:#2B91AF">Form5</span><span style="color:#000000"> : </span><span style="color:#2B91AF">Form</span></div>
<div class="t" style="left:38.5px;top:271.80px;font-size:12px;line-height:12px;color:#2B91AF;font-weight:400;font-family:'Liberation Mono', monospace;letter-spacing:-0.1999999999999993px;">17</div>
<div class="t" style="left:91px;top:271.80px;font-size:12px;line-height:12px;color:#000;font-weight:400;font-family:'Liberation Mono', monospace;letter-spacing:-0.1999999999999993px;white-space:pre;"><span style="color:#000000">    {</span></div>
<div class="t" style="left:38.5px;top:287.80px;font-size:12px;line-height:12px;color:#2B91AF;font-weight:400;font-family:'Liberation Mono', monospace;letter-spacing:-0.1999999999999993px;">18</div>
<div class="t" style="left:91px;top:287.80px;font-size:12px;line-height:12px;color:#000;font-weight:400;font-family:'Liberation Mono', monospace;letter-spacing:-0.1999999999999993px;white-space:pre;"><span style="color:#000000">        </span><span style="color:#2B91AF">conexion</span><span style="color:#000000"> cn = </span><span style="color:#0000FF">new</span><span style="color:#000000"> </span><span style="color:#2B91AF">conexion</span><span style="color:#000000">();</span></div>
<div class="t" style="left:38.5px;top:303.80px;font-size:12px;line-height:12px;color:#2B91AF;font-weight:400;font-family:'Liberation Mono', monospace;letter-spacing:-0.1999999999999993px;">19</div>
<div class="t" style="left:91px;top:303.80px;font-size:12px;line-height:12px;color:#000;font-weight:400;font-family:'Liberation Mono', monospace;letter-spacing:-0.1999999999999993px;white-space:pre;"><span style="color:#000000">        </span><span style="color:#0000FF">public</span><span style="color:#000000"> </span><span style="color:#0000FF">int</span><span style="color:#000000"> p;</span></div>
<div class="t" style="left:147.00px;top:319.54px;font-size:10px;line-height:10px;color:#999999;font-weight:400;font-family:'Liberation Sans', sans-serif;letter-spacing:0.318px;">1 referencia</div>
<div class="t" style="left:38.5px;top:332.80px;font-size:12px;line-height:12px;color:#2B91AF;font-weight:400;font-family:'Liberation Mono', monospace;letter-spacing:-0.1999999999999993px;">20</div>
<div class="t" style="left:91px;top:332.80px;font-size:12px;line-height:12px;color:#000;font-weight:400;font-family:'Liberation Mono', monospace;letter-spacing:-0.1999999999999993px;white-space:pre;"><span style="color:#000000">        </span><span style="color:#0000FF">public</span><span style="color:#000000"> Form5()</span></div>
<div class="t" style="left:38.5px;top:348.80px;font-size:12px;line-height:12px;color:#2B91AF;font-weight:400;font-family:'Liberation Mono', monospace;letter-spacing:-0.1999999999999993px;">21</div>
<div class="t" style="left:91px;top:348.80px;font-size:12px;line-height:12px;color:#000;font-weight:400;font-family:'Liberation Mono', monospace;letter-spacing:-0.1999999999999993px;white-space:pre;"><span style="color:#000000">        {</span></div>
<div class="t" style="left:38.5px;top:364.80px;font-size:12px;line-height:12px;color:#2B91AF;font-weight:400;font-family:'Liberation Mono', monospace;letter-spacing:-0.1999999999999993px;">22</div>
<div class="t" style="left:91px;top:364.80px;font-size:12px;line-height:12px;color:#000;font-weight:400;font-family:'Liberation Mono', monospace;letter-spacing:-0.1999999999999993px;white-space:pre;"><span style="color:#000000">            InitializeComponent();</span></div>
<div class="t" style="left:38.5px;top:380.80px;font-size:12px;line-height:12px;color:#2B91AF;font-weight:400;font-family:'Liberation Mono', monospace;letter-spacing:-0.1999999999999993px;">23</div>
<div class="t" style="left:91px;top:380.80px;font-size:12px;line-height:12px;color:#000;font-weight:400;font-family:'Liberation Mono', monospace;letter-spacing:-0.1999999999999993px;white-space:pre;"><span style="color:#000000">        }</span></div>
<div class="t" style="left:38.5px;top:396.80px;font-size:12px;line-height:12px;color:#2B91AF;font-weight:400;font-family:'Liberation Mono', monospace;letter-spacing:-0.1999999999999993px;">24</div>
<div class="t" style="left:147.00px;top:412.54px;font-size:10px;line-height:10px;color:#999999;font-weight:400;font-family:'Liberation Sans', sans-serif;letter-spacing:0.318px;">1 referencia</div>
<div class="t" style="left:38.5px;top:425.80px;font-size:12px;line-height:12px;color:#2B91AF;font-weight:400;font-family:'Liberation Mono', monospace;letter-spacing:-0.1999999999999993px;">25</div>
<div class="t" style="left:91px;top:425.80px;font-size:12px;line-height:12px;color:#000;font-weight:400;font-family:'Liberation Mono', monospace;letter-spacing:-0.1999999999999993px;white-space:pre;"><span style="color:#000000">        </span><span style="color:#0000FF">private</span><span style="color:#000000"> </span><span style="color:#0000FF">void</span><span style="color:#000000"> button1_Click(</span><span style="color:#0000FF">object</span><span style="color:#000000"> sender, </span><span style="color:#2B91AF">EventArgs</span><span style="color:#000000"> e)</span></div>
<div class="t" style="left:38.5px;top:441.80px;font-size:12px;line-height:12px;color:#2B91AF;font-weight:400;font-family:'Liberation Mono', monospace;letter-spacing:-0.1999999999999993px;">26</div>
<div class="t" style="left:91px;top:441.80px;font-size:12px;line-height:12px;color:#000;font-weight:400;font-family:'Liberation Mono', monospace;letter-spacing:-0.1999999999999993px;white-space:pre;"><span style="color:#000000">        {</span></div>
<div class="t" style="left:38.5px;top:457.80px;font-size:12px;line-height:12px;color:#2B91AF;font-weight:400;font-family:'Liberation Mono', monospace;letter-spacing:-0.1999999999999993px;">27</div>
<div class="t" style="left:91px;top:457.80px;font-size:12px;line-height:12px;color:#000;font-weight:400;font-family:'Liberation Mono', monospace;letter-spacing:-0.1999999999999993px;white-space:pre;"><span style="color:#000000">            </span><span style="color:#0000FF">try</span></div>
<div class="t" style="left:38.5px;top:473.80px;font-size:12px;line-height:12px;color:#2B91AF;font-weight:400;font-family:'Liberation Mono', monospace;letter-spacing:-0.1999999999999993px;">28</div>
<div class="t" style="left:91px;top:473.80px;font-size:12px;line-height:12px;color:#000;font-weight:400;font-family:'Liberation Mono', monospace;letter-spacing:-0.1999999999999993px;white-space:pre;"><span style="color:#000000">            {</span></div>
<div class="t" style="left:38.5px;top:489.80px;font-size:12px;line-height:12px;color:#2B91AF;font-weight:400;font-family:'Liberation Mono', monospace;letter-spacing:-0.1999999999999993px;">29</div>
<div class="t" style="left:91px;top:489.80px;font-size:12px;line-height:12px;color:#000;font-weight:400;font-family:'Liberation Mono', monospace;letter-spacing:-0.1999999999999993px;white-space:pre;"><span style="color:#000000">                </span><span style="color:#0000FF">if</span><span style="color:#000000"> (openFileDialog1.ShowDialog() == </span><span style="color:#2B91AF">DialogResult</span><span style="color:#000000">.OK)</span></div>
<div class="t" style="left:38.5px;top:505.80px;font-size:12px;line-height:12px;color:#2B91AF;font-weight:400;font-family:'Liberation Mono', monospace;letter-spacing:-0.1999999999999993px;">30</div>
<div class="t" style="left:91px;top:505.80px;font-size:12px;line-height:12px;color:#000;font-weight:400;font-family:'Liberation Mono', monospace;letter-spacing:-0.1999999999999993px;white-space:pre;"><span style="color:#000000">                {</span></div>
<div class="t" style="left:38.5px;top:521.80px;font-size:12px;line-height:12px;color:#2B91AF;font-weight:400;font-family:'Liberation Mono', monospace;letter-spacing:-0.1999999999999993px;">31</div>
<div class="t" style="left:91px;top:521.80px;font-size:12px;line-height:12px;color:#000;font-weight:400;font-family:'Liberation Mono', monospace;letter-spacing:-0.1999999999999993px;white-space:pre;"><span style="color:#000000">                    </span><span style="color:#0000FF">string</span><span style="color:#000000"> imagen = openFileDialog1.FileName;</span></div>
</div>
<div class="r" style="left:344px;top:142px;width:1px;height:177px;background:#A5A5A5;"></div>
<div class="r" style="left:344px;top:319px;width:4px;height:1px;background:#A5A5A5;"></div>
<div class="r" style="left:344px;top:350px;width:1px;height:306px;background:#A5A5A5;"></div>
<svg class="r" style="left:339px;top:132px;" width="9" height="9" viewBox="0 0 9 9"><rect x="0.5" y="0.5" width="8" height="8" fill="#fff" stroke="#A5A5A5"/><path d="M2 4.5 H7" stroke="#1E1E1E" stroke-width="1"/></svg>
<svg class="r" style="left:339px;top:340px;" width="9" height="9" viewBox="0 0 9 9"><rect x="0.5" y="0.5" width="8" height="8" fill="#fff" stroke="#A5A5A5"/><path d="M2 4.5 H7" stroke="#1E1E1E" stroke-width="1"/></svg>
<svg class="r" style="left:339px;top:385px;" width="9" height="9" viewBox="0 0 9 9"><rect x="0.5" y="0.5" width="8" height="8" fill="#fff" stroke="#A5A5A5"/><path d="M2 4.5 H7" stroke="#1E1E1E" stroke-width="1"/></svg>
<svg class="r" style="left:339px;top:462px;" width="9" height="9" viewBox="0 0 9 9"><rect x="0.5" y="0.5" width="8" height="8" fill="#fff" stroke="#A5A5A5"/><path d="M2 4.5 H7" stroke="#1E1E1E" stroke-width="1"/></svg>
<svg class="r" style="left:339px;top:555px;" width="9" height="9" viewBox="0 0 9 9"><rect x="0.5" y="0.5" width="8" height="8" fill="#fff" stroke="#A5A5A5"/><path d="M2 4.5 H7" stroke="#1E1E1E" stroke-width="1"/></svg>
<svg class="r" style="left:339px;top:587px;" width="9" height="9" viewBox="0 0 9 9"><rect x="0.5" y="0.5" width="8" height="8" fill="#fff" stroke="#A5A5A5"/><path d="M2 4.5 H7" stroke="#1E1E1E" stroke-width="1"/></svg>
<svg class="r" style="left:339px;top:619px;" width="9" height="9" viewBox="0 0 9 9"><rect x="0.5" y="0.5" width="8" height="8" fill="#fff" stroke="#A5A5A5"/><path d="M2 4.5 H7" stroke="#1E1E1E" stroke-width="1"/></svg>
<div class="r" style="left:344px;top:521px;width:4px;height:1px;background:#A5A5A5;"></div>
<div class="r" style="left:353px;top:370px;width:1px;height:286px;background-image:repeating-linear-gradient(to bottom,#CFCFCF 0 3px,transparent 3px 6px)"></div>
<div class="r" style="left:381px;top:415px;width:1px;height:241px;background-image:repeating-linear-gradient(to bottom,#CFCFCF 0 3px,transparent 3px 6px)"></div>
<div class="r" style="left:409px;top:492px;width:1px;height:16px;background-image:repeating-linear-gradient(to bottom,#CFCFCF 0 3px,transparent 3px 6px)"></div>
<div class="r" style="left:409px;top:585px;width:1px;height:71px;background-image:repeating-linear-gradient(to bottom,#CFCFCF 0 3px,transparent 3px 6px)"></div>
<div class="r" style="left:437px;top:617px;width:1px;height:39px;background-image:repeating-linear-gradient(to bottom,#CFCFCF 0 3px,transparent 3px 6px)"></div>
<div class="r" style="left:465px;top:649px;width:1px;height:7px;background-image:repeating-linear-gradient(to bottom,#CFCFCF 0 3px,transparent 3px 6px)"></div>
<div class="r" style="left:498px;top:564px;width:2px;height:2px;background:#A8A8A8;"></div>
<div class="r" style="left:502px;top:564px;width:2px;height:2px;background:#A8A8A8;"></div>
<div class="r" style="left:506px;top:564px;width:2px;height:2px;background:#A8A8A8;"></div>
<div class="r" style="left:259px;top:656px;width:782px;height:17px;background:#F5F5F5;"></div>
<div class="r" style="left:259px;top:656px;width:60px;height:17px;background:#FFFFFF;box-sizing:border-box;border:1px solid #CCCEDB;"></div>
<div class="t" style="left:261.00px;top:658.84px;font-size:12px;line-height:12px;color:#1E1E1E;font-weight:400;font-family:'Liberation Sans', sans-serif;letter-spacing:-0.625px;">100 %</div>
<svg class="r" style="left:309px;top:664px;" width="6" height="3" viewBox="0 0 6 3"><path d="M0 0 H6 L3.0 3 Z" fill="#717171"/></svg>
<svg class="r" style="left:325px;top:660px;" width="5" height="9" viewBox="0 0 5 9"><path d="M5 0 V9 L0 4.5 Z" fill="#868999"/></svg>
<div class="r" style="left:336px;top:660px;width:610px;height:9px;background:#C2C3C9;"></div>
<div class="r" style="left:258px;top:673px;width:783px;height:1px;background:#CCCEDB;"></div>
<div class="r" style="left:1044px;top:85px;width:297px;height:589px;background:#F5F5F5;box-sizing:border-box;border:1px solid #CCCEDB;"></div>
<div class="r" style="left:1044px;top:85px;width:297px;height:22px;background:#007ACC;"></div>
<div class="t" style="left:1048.00px;top:90.84px;font-size:12px;line-height:12px;color:#FFFFFF;font-weight:400;font-family:'Liberation Sans', sans-serif;letter-spacing:-0.130px;">Explorador de soluciones</div>
<svg class="r" style="left:1188px;top:94px" width="98" height="5"><rect x="0" y="0" width="1" height="1" fill="#5FA9E0"/><rect x="4" y="0" width="1" height="1" fill="#5FA9E0"/><rect x="8" y="0" width="1" height="1" fill="#5FA9E0"/><rect x="12" y="0" width="1" height="1" fill="#5FA9E0"/><rect x="16" y="0" width="1" height="1" fill="#5FA9E0"/><rect x="20" y="0" width="1" height="1" fill="#5FA9E0"/><rect x="24" y="0" width="1" height="1" fill="#5FA9E0"/><rect x="28" y="0" width="1" height="1" fill="#5FA9E0"/><rect x="32" y="0" width="1" height="1" fill="#5FA9E0"/><rect x="36" y="0" width="1" height="1" fill="#5FA9E0"/><rect x="40" y="0" width="1" height="1" fill="#5FA9E0"/><rect x="44" y="0" width="1" height="1" fill="#5FA9E0"/><rect x="48" y="0" width="1" height="1" fill="#5FA9E0"/><rect x="52" y="0" width="1" height="1" fill="#5FA9E0"/><rect x="56" y="0" width="1" height="1" fill="#5FA9E0"/><rect x="60" y="0" width="1" height="1" fill="#5FA9E0"/><rect x="64" y="0" width="1" height="1" fill="#5FA9E0"/><rect x="68" y="0" width="1" height="1" fill="#5FA9E0"/><rect x="72" y="0" width="1" height="1" fill="#5FA9E0"/><rect x="76" y="0" width="1" height="1" fill="#5FA9E0"/><rect x="80" y="0" width="1" height="1" fill="#5FA9E0"/><rect x="84" y="0" width="1" height="1" fill="#5FA9E0"/><rect x="88" y="0" width="1" height="1" fill="#5FA9E0"/><rect x="92" y="0" width="1" height="1" fill="#5FA9E0"/><rect x="96" y="0" width="1" height="1" fill="#5FA9E0"/><rect x="0" y="4" width="1" height="1" fill="#5FA9E0"/><rect x="4" y="4" width="1" height="1" fill="#5FA9E0"/><rect x="8" y="4" width="1" height="1" fill="#5FA9E0"/><rect x="12" y="4" width="1" height="1" fill="#5FA9E0"/><rect x="16" y="4" width="1" height="1" fill="#5FA9E0"/><rect x="20" y="4" width="1" height="1" fill="#5FA9E0"/><rect x="24" y="4" width="1" height="1" fill="#5FA9E0"/><rect x="28" y="4" width="1" height="1" fill="#5FA9E0"/><rect x="32" y="4" width="1" height="1" fill="#5FA9E0"/><rect x="36" y="4" width="1" height="1" fill="#5FA9E0"/><rect x="40" y="4" width="1" height="1" fill="#5FA9E0"/><rect x="44" y="4" width="1" height="1" fill="#5FA9E0"/><rect x="48" y="4" width="1" height="1" fill="#5FA9E0"/><rect x="52" y="4" width="1" height="1" fill="#5FA9E0"/><rect x="56" y="4" width="1" height="1" fill="#5FA9E0"/><rect x="60" y="4" width="1" height="1" fill="#5FA9E0"/><rect x="64" y="4" width="1" height="1" fill="#5FA9E0"/><rect x="68" y="4" width="1" height="1" fill="#5FA9E0"/><rect x="72" y="4" width="1" height="1" fill="#5FA9E0"/><rect x="76" y="4" width="1" height="1" fill="#5FA9E0"/><rect x="80" y="4" width="1" height="1" fill="#5FA9E0"/><rect x="84" y="4" width="1" height="1" fill="#5FA9E0"/><rect x="88" y="4" width="1" height="1" fill="#5FA9E0"/><rect x="92" y="4" width="1" height="1" fill="#5FA9E0"/><rect x="96" y="4" width="1" height="1" fill="#5FA9E0"/><rect x="2" y="2" width="1" height="1" fill="#5FA9E0"/><rect x="6" y="2" width="1" height="1" fill="#5FA9E0"/><rect x="10" y="2" width="1" height="1" fill="#5FA9E0"/><rect x="14" y="2" width="1" height="1" fill="#5FA9E0"/><rect x="18" y="2" width="1" height="1" fill="#5FA9E0"/><rect x="22" y="2" width="1" height="1" fill="#5FA9E0"/><rect x="26" y="2" width="1" height="1" fill="#5FA9E0"/><rect x="30" y="2" width="1" height="1" fill="#5FA9E0"/><rect x="34" y="2" width="1" height="1" fill="#5FA9E0"/><rect x="38" y="2" width="1" height="1" fill="#5FA9E0"/><rect x="42" y="2" width="1" height="1" fill="#5FA9E0"/><rect x="46" y="2" width="1" height="1" fill="#5FA9E0"/><rect x="50" y="2" width="1" height="1" fill="#5FA9E0"/><rect x="54" y="2" width="1" height="1" fill="#5FA9E0"/><rect x="58" y="2" width="1" height="1" fill="#5FA9E0"/><rect x="62" y="2" width="1" height="1" fill="#5FA9E0"/><rect x="66" y="2" width="1" height="1" fill="#5FA9E0"/><rect x="70" y="2" width="1" height="1" fill="#5FA9E0"/><rect x="74" y="2" width="1" height="1" fill="#5FA9E0"/><rect x="78" y="2" width="1" height="1" fill="#5FA9E0"/><rect x="82" y="2" width="1" height="1" fill="#5FA9E0"/><rect x="86" y="2" width="1" height="1" fill="#5FA9E0"/><rect x="90" y="2" width="1" height="1" fill="#5FA9E0"/><rect x="94" y="2" width="1" height="1" fill="#5FA9E0"/></svg>
<svg class="r" style="left:1292px;top:94px;" width="8" height="4" viewBox="0 0 8 4"><path d="M0 0 H8 L4 4 Z" fill="#FFFFFF"/></svg>
<svg class="r" style="left:1307px;top:93px;" width="11" height="7" viewBox="0 0 11 7"><rect x="0" y="3" width="4" height="1" fill="#FFFFFF"/><rect x="4" y="0" width="1" height="7" fill="#FFFFFF"/><rect x="5" y="1" width="6" height="1" fill="#FFFFFF"/><rect x="10" y="1" width="1" height="5" fill="#FFFFFF"/><rect x="5" y="4" width="6" height="2" fill="#FFFFFF"/></svg>
<svg class="r" style="left:1324px;top:92px;" width="10" height="8" viewBox="0 0 10 8"><path d="M0.5 0.3 L9.5 7.7 M9.5 0.3 L0.5 7.7" stroke="#FFFFFF" stroke-width="1.4"/></svg>
<div class="r" style="left:1045px;top:107px;width:295px;height:28px;background:#EEEEF2;"></div>
<svg class="r" style="left:1054px;top:115px;" width="12" height="12" viewBox="0 0 12 12"><circle cx="6" cy="6" r="6" fill="#C6C6C6"/><path d="M2.5 6 H10 M5.6 2.8 L2.5 6 L5.6 9.2" fill="none" stroke="#EEEEF2" stroke-width="1.9"/></svg>
<svg class="r" style="left:1076px;top:115px;" width="12" height="12" viewBox="0 0 12 12"><circle cx="6" cy="6" r="6" fill="#C6C6C6"/><path d="M2 6 H9.5 M6.4 2.8 L9.5 6 L6.4 9.2" fill="none" stroke="#EEEEF2" stroke-width="1.9"/></svg>
<svg class="r" style="left:1096px;top:113px;" width="16" height="16" viewBox="0 0 16 16"><path d="M1.2 8 L8 1.5 L14.8 8" fill="none" stroke="#424242" stroke-width="1.4"/><path d="M11 1 V5" stroke="#424242" stroke-width="1.3"/><path d="M2.8 7 V14.3 H13.2 V7" fill="#F5F5F5" stroke="#424242" stroke-width="1.3"/><rect x="6" y="9" width="3.5" height="5.3" fill="#424242"/></svg>
<svg class="r" style="left:1119px;top:112px;" width="16" height="16" viewBox="0 0 16 16"><path d="M6 4 H9 V2 H15 V9.5 H6 Z" fill="#DCB67A"/><path d="M10 3.2 H14" stroke="#F3E3C3" stroke-width="0.8"/><rect x="1.7" y="7.8" width="8" height="6.5" fill="#F0F0F2" stroke="#2A2A2A" stroke-width="1.3"/><rect x="1.2" y="7.2" width="9" height="1.6" fill="#2A2A2A"/><path d="M2.5 6 V3 H5.5" fill="none" stroke="#00539C" stroke-width="1.3"/><path d="M5 1 L7.2 3 L5 5 Z" fill="#00539C"/><path d="M13.5 10.5 V13.5 H11" fill="none" stroke="#00539C" stroke-width="1.3"/><path d="M11.5 11.5 L9.3 13.5 L11.5 15.5 Z" fill="#00539C"/></svg>
<svg class="r" style="left:1141px;top:120px;" width="6" height="3" viewBox="0 0 6 3"><path d="M0 0 H6 L3.0 3 Z" fill="#717171"/></svg>
<div class="r" style="left:1153px;top:111px;width:1px;height:20px;background:#CCCEDB;"></div>
<svg class="r" style="left:1163px;top:113px;" width="15" height="16" viewBox="0 0 15 16"><path d="M1 1 H6.2 L3.6 4.8 Z" fill="#424242"/><circle cx="9" cy="9.8" r="4.8" fill="none" stroke="#424242" stroke-width="1.2"/><path d="M9 6.8 V10.2 H11.7" fill="none" stroke="#424242" stroke-width="1.2"/></svg>
<svg class="r" style="left:1184px;top:120px;" width="6" height="3" viewBox="0 0 6 3"><path d="M0 0 H6 L3.0 3 Z" fill="#717171"/></svg>
<svg class="r" style="left:1197px;top:114px;" width="14" height="14" viewBox="0 0 14 14"><path d="M1.5 3.5 H11.5 M4.5 0.8 L1.5 3.5 L4.5 6.2 M12.5 10 H2.5 M9.5 7.3 L12.5 10 L9.5 12.7" fill="none" stroke="#424242" stroke-width="1.8"/></svg>
<svg class="r" style="left:1219px;top:113px;" width="14" height="16" viewBox="0 0 14 16"><path d="M12 8 A5.2 5.2 0 1 1 7.2 4.3" fill="none" stroke="#00539C" stroke-width="2.1"/><path d="M7.2 0.8 L12 4.2 L7.2 7.6 Z" fill="#00539C"/></svg>
<svg class="r" style="left:1242px;top:114px;" width="13" height="13" viewBox="0 0 13 13"><rect x="1" y="5.5" width="6.5" height="6.5" fill="none" stroke="#424242" stroke-width="1.2"/><path d="M3 3.5 H9.5 V10 M5 1.5 H11.5 V8" fill="none" stroke="#424242" stroke-width="1.2"/><path d="M2.5 8.8 H6" stroke="#00539C" stroke-width="1.2"/></svg>
<div class="r" style="left:1259px;top:109px;width:22px;height:24px;background:#EEEEF2;box-sizing:border-box;border:1px solid #3399FF;"></div>
<svg class="r" style="left:1262px;top:113px;" width="16" height="16" viewBox="0 0 16 16"><path d="M4 1 H1 V10.5 H3" fill="none" stroke="#424242" stroke-width="1.2"/><path d="M4 3.5 V12 M5 3 H9.5 L12 5.5" fill="none" stroke="#424242" stroke-width="0"/><path d="M6 3.2 H10.5 L13.5 6.2 V12.5" fill="none" stroke="#424242" stroke-width="1.2"/><path d="M4.2 5.6 H9 L11.2 7.8 V14.6 H4.2 Z" fill="#EEEEF2" stroke="#424242" stroke-width="1.2"/><path d="M6 9 H9.5 M6 11 H9.5 M6 13 H9.5" stroke="#424242" stroke-width="1"/></svg>
<div class="r" style="left:1284px;top:111px;width:1px;height:20px;background:#CCCEDB;"></div>
<svg class="r" style="left:1292px;top:114px;" width="15" height="15" viewBox="0 0 15 15"><path d="M2 13 L8 7" stroke="#424242" stroke-width="2.6" stroke-linecap="round"/><circle cx="10.3" cy="4.8" r="4" fill="#424242"/><circle cx="11.8" cy="3.3" r="1.6" fill="#EEEEF2"/><path d="M11 1 L14.5 4.5" stroke="#EEEEF2" stroke-width="1.5"/></svg>
<svg class="r" style="left:1332px;top:112px;" width="7" height="3" viewBox="0 0 7 3"><path d="M0 0 L2 1.5 L0 3 Z M4 0 L6 1.5 L4 3 Z" fill="#717171"/></svg>
<div class="r" style="left:1046px;top:135px;width:294px;height:21px;background:#FFFFFF;box-sizing:border-box;border:1px solid #CCCEDB;"></div>
<div class="t" style="left:1049.00px;top:139.84px;font-size:12px;line-height:12px;color:#6D6D6D;font-weight:400;font-family:'Liberation Sans', sans-serif;letter-spacing:-0.143px;">Buscar en Explorador de soluciones (Ctrl+´)</div>
<svg class="r" style="left:1311px;top:138px;" width="15" height="15" viewBox="0 0 15 15"><circle cx="9.5" cy="5.4" r="3.6" fill="none" stroke="#717171" stroke-width="1.7"/><path d="M7 8 L3 12.2" stroke="#717171" stroke-width="2.4" stroke-linecap="round"/></svg>
<svg class="r" style="left:1330px;top:144px;" width="6" height="3" viewBox="0 0 6 3"><path d="M0 0 H6 L3.0 3 Z" fill="#717171"/></svg>
<svg class="r" style="left:1057px;top:162px;" width="16" height="16" viewBox="0 0 16 16"><rect x="1.5" y="2" width="13" height="10.5" fill="#F0F0F0"/><rect x="1" y="1" width="14" height="2.3" fill="#424242"/><path d="M1.6 3 V7 M14.4 3 V12.4 H10" fill="none" stroke="#424242" stroke-width="1.2"/><path d="M1.8 9.2 V13.6 L4 11.4 Z M4 11.4 L8.2 8 V15 Z" fill="none" stroke="#68217A" stroke-width="1.7" stroke-linejoin="round"/><rect x="6.8" y="8.5" width="1.8" height="6.3" fill="#68217A"/></svg>
<div class="t" style="left:1077.00px;top:163.84px;font-size:12px;line-height:12px;color:#1E1E1E;font-weight:400;font-family:'Liberation Sans', sans-serif;letter-spacing:-0.026px;">Solución 'Punto de Venta'  (1 proyecto)</div>
<div class="r" style="left:1046px;top:178px;width:294px;height:19px;background:#3399FF;"></div>
<svg class="r" style="left:1056px;top:183px;" width="6" height="10" viewBox="0 0 6 10"><path d="M0.6 0.8 L5.2 5 L0.6 9.2 Z" fill="none" stroke="#FFFFFF" stroke-width="1.1"/></svg>
<svg class="r" style="left:1075px;top:181px;" width="15" height="13" viewBox="0 0 15 13"><rect x="0" y="0" width="15" height="13" fill="#FFFFFF"/><rect x="0.5" y="0.5" width="14" height="12" fill="#F3F3F3" stroke="#388A34" stroke-width="1.1"/><path d="M6.6 3.6 Q6 3.2 5 3.2 Q2.8 3.2 2.8 6.5 Q2.8 9.8 5 9.8 Q6 9.8 6.6 9.4" fill="none" stroke="#424242" stroke-width="1.15"/><path d="M7.8 5.2 H12.8 M7.8 7.8 H12.8 M9.6 3.2 L9.2 10 M11.6 3.2 L11.2 10" stroke="#424242" stroke-width="1"/></svg>
<div class="t" style="left:1096.00px;top:182.84px;font-size:12px;line-height:12px;color:#FFFFFF;font-weight:700;font-family:'Liberation Sans', sans-serif;letter-spacing:-0.154px;">Punto de Venta</div>
<div class="r" style="left:1360px;top:85px;width:6px;height:131px;background:#CCCEDB;"></div>
<div class="t" style="left:-1.00px;top:0.00px;font-size:12px;line-height:12px;color:#1E1E1E;font-weight:400;font-family:'Liberation Sans', sans-serif;letter-spacing:-0.191px;transform-origin:0 0;transform:translate(1356.3px,85.6px) rotate(90deg);">Explorador de soluciones</div>
<div class="t" style="left:30.00px;top:681.84px;font-size:12px;line-height:12px;color:#1E1E1E;font-weight:400;font-family:'Liberation Sans', sans-serif;letter-spacing:-0.200px;">Lista de errores</div>
<div class="r" style="left:31px;top:699px;width:79px;height:6px;background:#CCCEDB;"></div>
<div class="t" style="left:122.00px;top:681.84px;font-size:12px;line-height:12px;color:#1E1E1E;font-weight:400;font-family:'Liberation Sans', sans-serif;letter-spacing:-0.028px;">Consola del Administrador de paquetes</div>
<div class="r" style="left:122px;top:699px;width:208px;height:6px;background:#CCCEDB;"></div>
<div class="t" style="left:341.80px;top:681.84px;font-size:12px;line-height:12px;color:#1E1E1E;font-weight:400;font-family:'Liberation Sans', sans-serif;letter-spacing:-0.500px;">Salida</div>
<div class="r" style="left:342px;top:699px;width:31px;height:6px;background:#CCCEDB;"></div>
<div class="r" style="left:0px;top:705px;width:1366px;height:23px;background:#007ACC;"></div>
<div class="t" style="left:3.80px;top:710.84px;font-size:12px;line-height:12px;color:#FFFFFF;font-weight:400;font-family:'Liberation Sans', sans-serif;letter-spacing:-0.118px;">Este elemento no admite la vista previa</div>
<div class="t" style="left:605.00px;top:710.84px;font-size:12px;line-height:12px;color:#FFFFFF;font-weight:400;font-family:'Liberation Sans', sans-serif;letter-spacing:-0.200px;">Lín 64</div>
<div class="t" style="left:698.00px;top:710.84px;font-size:12px;line-height:12px;color:#FFFFFF;font-weight:400;font-family:'Liberation Sans', sans-serif;letter-spacing:-0.400px;">Col 13</div>
<div class="t" style="left:790.00px;top:710.84px;font-size:12px;line-height:12px;color:#FFFFFF;font-weight:400;font-family:'Liberation Sans', sans-serif;letter-spacing:-0.600px;">Car 13</div>
<div class="t" style="left:925.00px;top:710.84px;font-size:12px;line-height:12px;color:#FFFFFF;font-weight:400;font-family:'Liberation Sans', sans-serif;letter-spacing:0.000px;transform-origin:1px 0;transform:scaleX(0.9474);">INS</div>
<svg class="r" style="left:1130px;top:711px;" width="10" height="12" viewBox="0 0 10 12"><path d="M5 1 V12 M1 5 L5 1 L9 5" fill="none" stroke="#E0E0E0" stroke-width="1.8"/></svg>
<div class="t" style="left:1149.00px;top:710.84px;font-size:12px;line-height:12px;color:#FFFFFF;font-weight:400;font-family:'Liberation Sans', sans-serif;letter-spacing:0.029px;">Agregar al control de código fuente</div>
<svg class="r" style="left:1343px;top:715px;" width="9" height="5" viewBox="0 0 9 5"><path d="M0 5 H9 L4.5 0 Z" fill="#FFFFFF"/></svg>
<div class="r" id="taskbar" style="left:0;top:728px;width:1366px;height:40px;overflow:hidden;background:linear-gradient(90deg,#2C587F 0%,#3A6B94 12%,#4A7CA4 28%,#4477A0 42%,#3B6D97 58%,#3A6C96 75%,#3D6F99 88%,#315F88 100%)">
<div class="r" style="left:-200px;top:-80px;width:1800px;height:200px;transform:rotate(-14deg);background:repeating-linear-gradient(180deg,rgba(255,255,255,0) 0 10px,rgba(95,165,220,0.6) 10px 12px,rgba(175,195,210,0.18) 12px 22px,rgba(255,255,255,0) 22px 27px,rgba(20,50,80,0.08) 27px 34px)"></div>
</div>
<svg class="r" style="left:12px;top:735px;" width="26" height="25" viewBox="0 0 26 25"><path d="M0 3.6 L10.6 2.1 V11.9 H0 Z M12 1.9 L26 0 V11.9 H12 Z M0 13.3 H10.6 V23 L0 21.5 Z M12 13.3 H26 V25 L12 23.1 Z" fill="#FFFFFF"/></svg>
<div class="r" style="left:52px;top:729px;width:50px;height:39px;box-sizing:border-box;border:1px solid rgba(220,235,245,0.55);background:rgba(180,210,230,0.25)"></div>
<div class="r" style="left:103px;top:729px;width:4px;height:39px;box-sizing:border-box;border:1px solid rgba(220,235,245,0.5);background:rgba(180,210,230,0.2)"></div>
<div class="r" style="left:107px;top:729px;width:4px;height:39px;box-sizing:border-box;border:1px solid rgba(220,235,245,0.5);background:rgba(180,210,230,0.2)"></div>
<svg class="r" style="left:61px;top:735px;" width="32" height="29" viewBox="0 0 32 29"><path d="M1 3 Q1 1 3 1 H15 L16.5 3 H31 V28 H1 Z" fill="#E9C158"/><rect x="4" y="2" width="12" height="4" fill="#FFFFFF"/><rect x="4" y="2" width="3" height="2.5" fill="#22B14C"/><rect x="12" y="4.5" width="12" height="4" fill="#FFFFFF"/><rect x="12" y="4.5" width="3" height="2.5" fill="#E03030"/><rect x="19" y="7" width="11" height="4" fill="#FFFFFF"/><rect x="19" y="7" width="3" height="2.5" fill="#2E8EE8"/><path d="M1 9 H19 L20 11 H31 V28 H1 Z" fill="#F7DC8A"/><path d="M4 28 V17 H28 V28 H23 V22 H9 V28 Z" fill="#8ED0F2" stroke="#5AB0E0" stroke-width="0.8"/><path d="M6 13 L9 18 M5 19 L12 15" stroke="#FFFFFF" stroke-width="0.8"/></svg>
<svg class="r" style="left:128px;top:733px;" width="30" height="30" viewBox="0 0 30 30"><rect x="0" y="0" width="30" height="30" fill="#008A00"/><path d="M4 9 L24 7 L25 26 L5 23 Z" fill="#FFFFFF"/><path d="M9 9 Q9 2 13 2 Q17 2 17 8 M13 8.5 Q13 3 17 3 Q20 3 20 8" fill="none" stroke="#FFFFFF" stroke-width="1.4"/><path d="M7.5 12.5 L13 12 V16.5 H7.5 Z M14 11.9 L20 11.4 V16.5 H14 Z M7.5 17.5 H13 V22 L7.5 21.4 Z M14 17.5 H20 V22.8 L14 22.2 Z" fill="#008A00"/></svg>
<svg class="r" style="left:189px;top:732px;" width="32" height="32" viewBox="0 0 32 32"><defs><linearGradient id="xg" x1="0" y1="0" x2="0" y2="1"><stop offset="0" stop-color="#F58A30"/><stop offset="1" stop-color="#E26A12"/></linearGradient></defs><rect x="0.5" y="0.5" width="31" height="31" rx="3.5" fill="url(#xg)"/><path d="M5 3.5 H27" stroke="#F8B070" stroke-width="1.2"/><g fill="#FFFFFF"><circle cx="11" cy="11" r="6.5"/><circle cx="21" cy="11" r="6.5"/><circle cx="11" cy="21" r="6.5"/><circle cx="21" cy="21" r="6.5"/></g><g fill="#EF7A22"><circle cx="10.5" cy="11.5" r="2.2"/><circle cx="21.5" cy="20.5" r="2.2"/><path d="M10 15.5 H22" stroke="#EF7A22" stroke-width="2.4"/><circle cx="4" cy="16" r="2.2"/><circle cx="28" cy="16" r="2.2"/></g></svg>
<svg class="r" style="left:252px;top:733px;" width="29" height="27" viewBox="0 0 29 27"><defs><linearGradient id="pg" x1="0" y1="0" x2="0" y2="1"><stop offset="0" stop-color="#0F5FC0"/><stop offset="1" stop-color="#063C8A"/></linearGradient></defs><rect x="0" y="0" width="29" height="27" fill="#04306E"/><rect x="2" y="1.5" width="27" height="25.5" fill="url(#pg)"/><rect x="2" y="0" width="26" height="2" fill="#2FA8F0"/><text x="6" y="19" font-family="Liberation Sans" font-size="15.5" font-weight="700" fill="#45C4F8">Ps</text></svg>
<svg class="r" style="left:313px;top:732px;" width="32" height="32" viewBox="0 0 32 32"><circle cx="16" cy="16" r="16" fill="#5FA81E"/><path d="M2 9 L6 5 L23 24 L23 30 L16 28 Z" fill="#FFFFFF"/><path d="M5 12 L19 26" stroke="#5FA81E" stroke-width="1.6"/><ellipse cx="25.5" cy="8.5" rx="4.5" ry="6.5" fill="#A8D878" opacity="0.8"/><path d="M25.5 2 V15 M22 4 Q25.5 9 22.5 13 M29 4 Q25.5 9 28.5 13" fill="none" stroke="#5FA81E" stroke-width="0.8"/></svg>
<svg class="r" style="left:377px;top:733px;" width="28" height="31" viewBox="0 0 28 31"><circle cx="14" cy="13.5" r="13.5" fill="#78C257"/><path d="M0.5 13 A13.5 13.5 0 0 1 27.5 13 Z" fill="#8BCB63"/><rect x="12" y="4" width="4" height="3" fill="#606060"/><circle cx="14" cy="10" r="3.2" fill="#606060"/><circle cx="14" cy="10" r="1.3" fill="#78C257"/><path d="M13 12.5 L3.5 30 M15 12.5 L24.5 30" stroke="#F0F0F0" stroke-width="2"/><path d="M7 21 Q14 24 21 21" fill="none" stroke="#F0F0F0" stroke-width="1.8"/></svg>
<svg class="r" style="left:438px;top:732px;" width="31" height="31" viewBox="0 0 31 31"><defs><radialGradient id="fg" cx="0.6" cy="0.35" r="0.6"><stop offset="0" stop-color="#4AA0E8"/><stop offset="1" stop-color="#1A3E9A"/></radialGradient></defs><circle cx="15.5" cy="15.5" r="15" fill="#E8591C"/><circle cx="17" cy="13.5" r="10.5" fill="url(#fg)"/><path d="M1 13 Q2 28 15.5 30.5 Q29 29.5 30.5 16 Q30 10 26 5 Q28 12 25 18 Q21 25 14 24 Q7 23 6 16 Q9 19 12 18 Q9 15 12 12 Q8 10 7 6 Q5 4 4 4 Q5 7 4 9 Q1 10 1 13 Z" fill="#F07A1E"/><path d="M24 4 Q29 8 30 15 Q28 10 25 8 Z" fill="#F8C030"/></svg>
<div class="r" style="left:486px;top:729px;width:58px;height:39px;box-sizing:border-box;border:1px solid rgba(220,235,245,0.55);background:rgba(180,210,230,0.25)"></div>
<div class="r" style="left:548px;top:729px;width:58px;height:39px;box-sizing:border-box;border:1px solid rgba(255,255,255,0.9);background:rgba(200,225,240,0.42)"></div>
<div class="r" style="left:610px;top:729px;width:58px;height:39px;box-sizing:border-box;border:1px solid rgba(220,235,245,0.55);background:rgba(180,210,230,0.25)"></div>
<div class="r" style="left:672px;top:729px;width:58px;height:39px;box-sizing:border-box;border:1px solid rgba(220,235,245,0.55);background:rgba(180,210,230,0.25)"></div>
<div class="r" style="left:734px;top:729px;width:58px;height:39px;box-sizing:border-box;border:1px solid rgba(220,235,245,0.55);background:rgba(180,210,230,0.25)"></div>
<div class="r" style="left:796px;top:729px;width:58px;height:39px;box-sizing:border-box;border:1px solid rgba(220,235,245,0.55);background:rgba(180,210,230,0.25)"></div>
<svg class="r" style="left:498px;top:731px;" width="36" height="35" viewBox="0 0 36 35"><defs><linearGradient id="cy" x1="0" y1="0" x2="1" y2="0"><stop offset="0" stop-color="#C89010"/><stop offset="0.5" stop-color="#FFE890"/><stop offset="1" stop-color="#C08008"/></linearGradient></defs><rect x="3" y="2" width="9" height="13" rx="1.5" fill="url(#cy)"/><ellipse cx="7.5" cy="2.5" rx="4.5" ry="1.5" fill="#FFF0B0"/><g fill="#3CB83C"><rect x="17" y="2" width="1.5" height="1.5"/><rect x="20" y="2" width="1.5" height="1.5"/><rect x="23" y="2" width="1.5" height="1.5"/><rect x="26" y="2" width="1.5" height="1.5"/><rect x="26" y="5" width="1.5" height="1.5"/><rect x="26" y="8" width="1.5" height="1.5"/><rect x="26" y="11" width="1.5" height="1.5"/><rect x="2" y="17" width="1.5" height="1.5"/><rect x="2" y="20" width="1.5" height="1.5"/><rect x="2" y="23" width="1.5" height="1.5"/><rect x="5" y="23" width="1.5" height="1.5"/><rect x="8" y="23" width="1.5" height="1.5"/><rect x="11" y="23" width="1.5" height="1.5"/></g><path d="M12 19 L25 33" stroke="#E8E8E8" stroke-width="2.2"/><path d="M10 16 Q12 14 15 17 L13 20 Z" fill="#D8D8D8"/><path d="M12 32 L24 20" stroke="#E8B020" stroke-width="2"/><path d="M21 17 L27 18 L31 23 L26 21 Z" fill="#D8D8D8"/></svg>
<svg class="r" style="left:561px;top:732px;" width="32" height="32" viewBox="0 0 32 32"><path d="M24.5 0 L32 3 L32 29 L24.8 32 L0 25 L0 24 L24.5 27 Z" fill="#865FC5"/><path d="M2.5 9 L2.5 18.6 L8 13.8 Z M8 13.8 L19.5 5 L19.5 22.6 Z" fill="none" stroke="#865FC5" stroke-width="2.8" stroke-linejoin="round"/></svg>
<svg class="r" style="left:624px;top:733px;" width="30" height="30" viewBox="0 0 30 30"><circle cx="15" cy="15" r="14.8" fill="#DB4437"/><path d="M15 15 L28.4 8.6 A14.8 14.8 0 0 1 15 29.8 Z" fill="#FFCD40"/><path d="M15 15 L15 29.8 A14.8 14.8 0 0 1 2.6 7 Z" fill="#0F9D58"/><path d="M15 15 L2.6 7 A14.8 14.8 0 0 1 28.4 8.6 Z" fill="#DB4437"/><path d="M15 15 L11.2 27.5" stroke="#0F9D58" stroke-width="0"/><circle cx="15" cy="15" r="6.6" fill="#FFFFFF"/><circle cx="15" cy="15" r="5.3" fill="#4285F4"/></svg>
<svg class="r" style="left:686px;top:733px;" width="31" height="30" viewBox="0 0 31 30"><rect x="0.5" y="2.5" width="30" height="27" rx="2.5" fill="#F4F4F4"/><rect x="3" y="0.5" width="25" height="23.5" rx="2" fill="#3A3A3A"/><rect x="3" y="0.5" width="25" height="11" rx="2" fill="#555555"/><text x="9" y="17.5" font-family="Liberation Sans" font-size="16" font-weight="700" fill="#F5A030">S</text></svg>
<svg class="r" style="left:747px;top:736px;" width="31" height="28" viewBox="0 0 31 28"><rect x="0.5" y="0.5" width="30" height="20" fill="#2C80D2"/><rect x="1.5" y="1.5" width="28" height="18" fill="#4FA2E8"/><circle cx="7" cy="8" r="4" fill="none" stroke="#FFFFFF" stroke-width="1"/><path d="M7.5 3 L11.5 6.5 L7.5 8.5 Z" fill="#F5A020"/><rect x="16" y="4" width="11" height="3.5" fill="#FFFFFF"/><rect x="17" y="5" width="6" height="1.5" fill="#1AA0E8"/><rect x="16" y="10" width="11" height="3.5" fill="#FFFFFF"/><rect x="17" y="11" width="6" height="1.5" fill="#1AA0E8"/><circle cx="6" cy="16" r="1" fill="#80E0FF"/><circle cx="9.5" cy="16" r="1.2" fill="#F5A020"/><ellipse cx="15.5" cy="23.5" rx="7" ry="4.5" fill="#D0D0D0"/><ellipse cx="15.5" cy="22.5" rx="6" ry="3" fill="#F0F0F0"/></svg>
<svg class="r" style="left:809px;top:732px;" width="32" height="33" viewBox="0 0 32 33"><path d="M3 18 Q1 10 10 8 Q20 6 28 10 Q30 13 27 17 Q23 22 18 23 Q14 25 12 27 Q8 29 6 26 Q7 22 4 21 Z" fill="#DDEEF8"/><circle cx="15" cy="18" r="2" fill="#9FB8C8"/><circle cx="7.5" cy="17" r="2.5" fill="#E53935"/><circle cx="13" cy="12" r="2.5" fill="#43A047"/><circle cx="19" cy="9.5" r="2.5" fill="#F5B820"/><path d="M17 31 L27 11" stroke="#E88A1A" stroke-width="2.6" stroke-linecap="round"/><path d="M26.5 12 L28 8" stroke="#A0A0A0" stroke-width="2"/><path d="M26 7 Q26 1 31 0 Q33 4 29 8 Z" fill="#C8A070"/></svg>
<svg class="r" style="left:1126px;top:747px;" width="10" height="5" viewBox="0 0 10 5"><path d="M0 5 H10 L5 0 Z" fill="#FFFFFF"/></svg>
<svg class="r" style="left:1147px;top:742px;" width="16" height="15" viewBox="0 0 16 15"><path d="M1 0 V15" stroke="#fff" stroke-width="1.6"/><path d="M2 1 H10 L11 3 H15 L13 6 L15 9 H10 L9 7 H2 Z" fill="#fff"/></svg>
<svg class="r" style="left:1172px;top:742px;" width="15" height="15" viewBox="0 0 15 15"><path d="M1.5 0 V4 M4.5 0 V4 M0 4 H6 V8 Q6 10 3 10 Q0 10 0 8 Z M3 10 V15" fill="none" stroke="#fff" stroke-width="1.4"/><rect x="8" y="1.5" width="6" height="13" fill="none" stroke="#fff" stroke-width="1.4"/><rect x="10" y="0" width="2" height="1.5" fill="#fff"/><rect x="9.5" y="4" width="3" height="9" fill="#fff"/></svg>
<svg class="r" style="left:1195px;top:743px;" width="16" height="13" viewBox="0 0 16 13"><path d="M1 13 V11 M4.5 13 V9 M8 13 V7 M11.5 13 V4 M15 13 V1" stroke="#fff" stroke-width="2"/></svg>
<svg class="r" style="left:1218px;top:742px;" width="16" height="15" viewBox="0 0 16 15"><path d="M0 5 H3 L8 1 V14 L3 10 H0 Z" fill="#fff"/><path d="M10 4.5 Q12 7.5 10 10.5 M12.5 2.5 Q16 7.5 12.5 12.5" fill="none" stroke="#fff" stroke-width="1.2"/></svg>
<div class="t" style="left:1250.40px;top:735.27px;font-size:11.5px;line-height:11.5px;color:#FFFFFF;font-weight:400;font-family:'Liberation Sans', sans-serif;letter-spacing:0.000px;transform-origin:1px 0;transform:scaleX(0.8000);">ESP</div>
<div class="t" style="left:1249.50px;top:751.77px;font-size:11.5px;line-height:11.5px;color:#FFFFFF;font-weight:400;font-family:'Liberation Sans', sans-serif;letter-spacing:0.000px;transform-origin:1px 0;transform:scaleX(1.0048);">LAA</div>
<div class="t" style="left:1291.00px;top:735.27px;font-size:11.5px;line-height:11.5px;color:#FFFFFF;font-weight:400;font-family:'Liberation Sans', sans-serif;letter-spacing:0.000px;">03:06 p.m.</div>
<div class="t" style="left:1289.20px;top:751.77px;font-size:11.5px;line-height:11.5px;color:#FFFFFF;font-weight:400;font-family:'Liberation Sans', sans-serif;letter-spacing:0.067px;">28/04/2017</div>
</body></html>
